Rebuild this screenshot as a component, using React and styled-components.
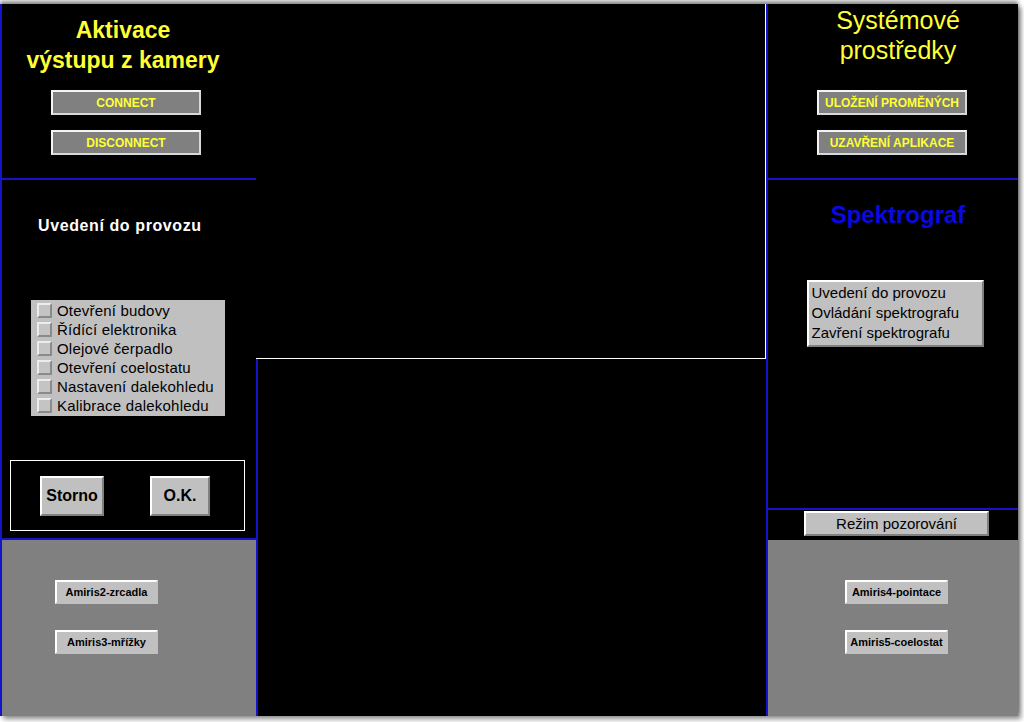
import React from 'react';
import styled, { createGlobalStyle } from 'styled-components';

const BLUE = '#1414c8';

const GlobalStyle = createGlobalStyle`
  html, body {
    margin: 0;
    padding: 0;
    background: #ffffff;
  }
  body {
    font-family: "Liberation Sans", Arial, sans-serif;
  }
`;

// Outer page with the faint window shadow round the edges
const Page = styled.div`
  width: 1024px;
  height: 722px;
  padding-top: 4px;
  box-sizing: border-box;
  background: #ffffff;
  overflow: hidden;
`;

const Screen = styled.div`
  width: 1018px;
  height: 712px;
  display: flex;
  background: #000;
  box-shadow: 0 -3px 4px rgba(0, 0, 0, 0.45), 3px 3px 5px rgba(0, 0, 0, 0.45);
`;

const Column = styled.div`
  display: flex;
  flex-direction: column;
  width: ${(p) => p.$width}px;
  flex: none;
  box-sizing: border-box;
  border-left: ${(p) => (p.$blueLeft ? `2px solid ${BLUE}` : 'none')};
`;

const Panel = styled.section`
  box-sizing: border-box;
  height: ${(p) => (p.$height ? `${p.$height}px` : 'auto')};
  flex: ${(p) => (p.$height ? 'none' : '1')};
  background: ${(p) => (p.$gray ? '#808080' : '#000')};
  border-bottom: ${(p) => (p.$line ? `2px solid ${BLUE}` : 'none')};
  display: flex;
  flex-direction: column;
  align-items: ${(p) => p.$align || 'center'};
  padding: ${(p) => p.$pad || '0'};
`;

const CenterTop = styled.div`
  height: 355px;
  flex: none;
  box-sizing: border-box;
  border-right: 1px solid #ffffff;
  border-bottom: 1px solid #ffffff;
  background: #000;
`;

const CenterBottom = styled.div`
  flex: 1;
  border-left: 2px solid ${BLUE};
  background: #000;
`;

const Title = styled.h1`
  margin: 0;
  color: ${(p) => p.$color || '#ffff33'};
  font-size: ${(p) => p.$size || 21}px;
  font-weight: ${(p) => (p.$bold ? 700 : 400)};
  line-height: 30px;
  text-align: center;
  font-family: "Liberation Sans", Arial, sans-serif;
`;

const SubTitle = styled.h2`
  margin: 0 0 0 36px;
  color: #ffffff;
  font-size: 16px;
  font-weight: 700;
  line-height: 20px;
  letter-spacing: 0.6px;
`;

const ButtonStack = styled.div`
  display: flex;
  flex-direction: column;
  gap: ${(p) => p.$gap}px;
  margin-top: ${(p) => p.$top}px;
  margin-left: ${(p) => p.$left || 0}px;
`;

// Dark grey buttons with yellow caption (top panels)
const YellowButton = styled.button`
  width: 150px;
  height: 25px;
  box-sizing: border-box;
  background: #808080;
  border: 2px solid;
  border-color: #f4f4f4 #d8d8d8 #d8d8d8 #f4f4f4;
  color: #ffff33;
  font-family: "Liberation Sans", Arial, sans-serif;
  font-size: 12px;
  font-weight: 700;
  padding: 0;
`;

// Light grey raised buttons (Storno, Amiris...)
const GrayButton = styled.button`
  width: ${(p) => p.$w}px;
  height: ${(p) => p.$h}px;
  box-sizing: border-box;
  background: #c0c0c0;
  border: 2px solid;
  border-color: #ffffff ${(p) => p.$dark || '#808080'} ${(p) => p.$dark || '#808080'} #ffffff;
  color: #000;
  font-family: "Liberation Sans", Arial, sans-serif;
  font-size: ${(p) => p.$fs || 11}px;
  font-weight: ${(p) => (p.$regular ? 400 : 700)};
  padding: 0;
`;

const CheckList = styled.ul`
  list-style: none;
  margin: 64px 0 0 29px;
  padding: 1px 0 1px 6px;
  width: 194px;
  box-sizing: border-box;
  background: #c0c0c0;
  display: flex;
  flex-direction: column;
`;

const CheckRow = styled.li`
  display: flex;
  align-items: center;
  gap: 5px;
  height: 19px;
  font-size: 15px;
  color: #000;
  letter-spacing: 0.2px;
  white-space: nowrap;
`;

const CheckBox = styled.span`
  width: 15px;
  height: 15px;
  box-sizing: border-box;
  background: #c4c4c4;
  border: 2px solid;
  border-color: #ececec #8a8a8a #8a8a8a #ececec;
  flex: none;
`;

const ConfirmBox = styled.div`
  margin: 44px 0 0 8px;
  width: 235px;
  height: 71px;
  box-sizing: border-box;
  border: 1px solid #ffffff;
  display: flex;
  align-items: center;
  padding-left: 29px;
  gap: 46px;
`;

const ListBox = styled.ul`
  list-style: none;
  margin: 50px 0 0 4px;
  padding: 1px 0 0 3px;
  width: 177px;
  height: 67px;
  box-sizing: border-box;
  background: #c0c0c0;
  border: 2px solid;
  border-color: #ffffff #808080 #808080 #ffffff;
`;

const ListItem = styled.li`
  height: 20px;
  line-height: 20px;
  font-size: 15px;
  color: #000;
  white-space: nowrap;
`;

const ModeStrip = styled.div`
  height: 32px;
  flex: none;
  box-sizing: border-box;
  background: #000;
  border-top: 2px solid ${BLUE};
  display: flex;
  align-items: flex-start;
  padding: 1px 0 0 36px;
`;

const checks = [
  'Otevření budovy',
  'Řídící elektronika',
  'Olejové čerpadlo',
  'Otevření coelostatu',
  'Nastavení dalekohledu',
  'Kalibrace dalekohledu',
];

const spectro = ['Uvedení do provozu', 'Ovládání spektrografu', 'Zavření spektrografu'];

export default function App() {
  return (
    <Page>
      <GlobalStyle />
      <Screen>
        {/* left column */}
        <Column $width={256} style={{ borderLeft: `2px solid ${BLUE}` }}>
          <Panel $height={176} $line $pad="11px 12px 0 0">
            <Title $bold $size={23}>Aktivace<br />výstupu z kamery</Title>
            <ButtonStack $gap={15} $top={15} $left={6}>
              <YellowButton>CONNECT</YellowButton>
              <YellowButton>DISCONNECT</YellowButton>
            </ButtonStack>
          </Panel>
          <Panel $height={360} $line $align="flex-start" $pad="36px 0 0 0">
            <SubTitle>Uvedení do provozu</SubTitle>
            <CheckList>
              {checks.map((c) => (
                <CheckRow key={c}>
                  <CheckBox />
                  {c}
                </CheckRow>
              ))}
            </CheckList>
            <ConfirmBox>
              <GrayButton $w={64} $h={40} $fs={16}>Storno</GrayButton>
              <GrayButton $w={60} $h={40} $fs={16}>O.K.</GrayButton>
            </ConfirmBox>
          </Panel>
          <Panel $gray $align="flex-start">
            <ButtonStack $gap={26} $top={40} $left={53}>
              <GrayButton $w={103} $h={24} $dark="#c0c0c0">Amiris2-zrcadla</GrayButton>
              <GrayButton $w={103} $h={24} $dark="#c0c0c0">Amiris3-mřížky</GrayButton>
            </ButtonStack>
          </Panel>
        </Column>

        {/* center column */}
        <Column $width={510}>
          <CenterTop />
          <CenterBottom />
        </Column>

        {/* right column */}
        <Column $width={252} $blueLeft>
          <Panel $height={176} $line $pad="1px 0 0 10px">
            <Title $size={25}>Systémové<br />prostředky</Title>
            <ButtonStack $gap={15} $top={25} $left={-12}>
              <YellowButton>ULOŽENÍ PROMĚNÝCH</YellowButton>
              <YellowButton>UZAVŘENÍ APLIKACE</YellowButton>
            </ButtonStack>
          </Panel>
          <Panel $height={328} $pad="20px 0 0 0">
            <Title $size={24} $bold $color="#0a0ae0" style={{ marginLeft: 10 }}>Spektrograf</Title>
            <ListBox>
              {spectro.map((s) => (
                <ListItem key={s}>{s}</ListItem>
              ))}
            </ListBox>
          </Panel>
          <ModeStrip>
            <GrayButton $w={185} $h={25} $fs={15} $regular>Režim pozorování</GrayButton>
          </ModeStrip>
          <Panel $gray $align="flex-start">
            <ButtonStack $gap={26} $top={40} $left={77}>
              <GrayButton $w={103} $h={24} $dark="#c0c0c0">Amiris4-pointace</GrayButton>
              <GrayButton $w={103} $h={24} $dark="#c0c0c0">Amiris5-coelostat</GrayButton>
            </ButtonStack>
          </Panel>
        </Column>
      </Screen>
    </Page>
  );
}
